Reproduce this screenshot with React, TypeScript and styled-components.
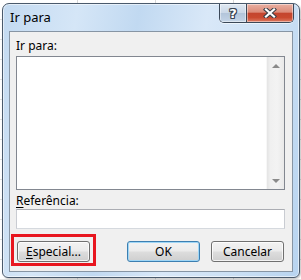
import React from "react";
import styled, { createGlobalStyle } from "styled-components";

const Global = createGlobalStyle`
  html, body { margin: 0; padding: 0; }
  body {
    width: 301px;
    height: 280px;
    overflow: hidden;
    background-color: #ffffff;
    background-image:
      repeating-linear-gradient(90deg, transparent 0 77px, #d8d8d8 77px 78px),
      repeating-linear-gradient(180deg, transparent 0 19px, #e2e2e2 19px 20px);
    font-family: "Noto Sans", "DejaVu Sans", sans-serif;
  }
  #root { padding: 3px 0 0 2px; }
`;

const Window = styled.div`
  width: 298px;
  box-sizing: border-box;
  border: 1px solid #4a5a6c;
  border-radius: 7px 7px 6px 6px;
  padding: 0 6px 5px 6px;
  background: linear-gradient(
    100deg,
    #c3daf1 0%,
    #d5e6f7 22%,
    #c1d9f1 40%,
    #d9e8f8 60%,
    #cadff4 82%,
    #b8d4f0 100%
  );
  box-shadow: inset 0 0 0 1px rgba(255, 255, 255, 0.55), 1px 1px 2px rgba(0,0,0,0.25);
`;

const TitleBar = styled.div`
  height: 27px;
  display: flex;
  align-items: flex-start;
  justify-content: space-between;
`;

const Title = styled.div`
  margin: 5px 0 0 1px;
  font-size: 13px;
  line-height: 17px;
  color: #000;
`;

const CaptionGroup = styled.div`
  display: flex;
  margin-right: -1px;
  border: 1px solid #3b4858;
  border-top: none;
  border-radius: 0 0 5px 5px;
  overflow: hidden;
  height: 18px;
  box-shadow: 0 1px 0 rgba(255, 255, 255, 0.6);
`;

const CaptionButton = styled.div<{ $kind: "help" | "close" }>`
  width: ${(p) => (p.$kind === "help" ? "26px" : "46px")};
  height: 18px;
  display: flex;
  align-items: center;
  justify-content: center;
  box-shadow: inset 0 0 0 1px rgba(255, 255, 255, 0.45);
  border-left: ${(p) => (p.$kind === "close" ? "1px solid #3b4858" : "none")};
  background: ${(p) =>
    p.$kind === "help"
      ? "linear-gradient(180deg, #dfe8f2 0%, #cbd8e7 48%, #b3c5da 52%, #c4d4e6 100%)"
      : "linear-gradient(180deg, #eab0a2 0%, #dc8b79 45%, #c4452e 52%, #c9492f 75%, #dd7a62 100%)"};
`;

const HelpGlyph = styled.span`
  font-family: "DejaVu Sans", sans-serif;
  font-weight: bold;
  font-size: 13px;
  line-height: 13px;
  color: #ffffff;
  text-shadow:
    1px 0 0 #3a4552, -1px 0 0 #3a4552, 0 1px 0 #3a4552, 0 -1px 0 #3a4552,
    1px 1px 0 #3a4552, -1px -1px 0 #3a4552, 1px -1px 0 #3a4552, -1px 1px 0 #3a4552;
`;

const Client = styled.div`
  border: 1px solid #8795a4;
  background: #f0f0f0;
  padding: 6px 7px 9px 6px;
  display: flex;
  flex-direction: column;
`;

const Label = styled.div<{ $gap?: number }>`
  font-size: 12px;
  line-height: 16px;
  color: #000;
  margin-top: ${(p) => p.$gap ?? 0}px;
  margin-bottom: 2px;
  u { text-decoration-thickness: 1px; text-underline-offset: 2px; }
`;

const ListBox = styled.div`
  height: 134px;
  box-sizing: border-box;
  border: 1px solid #828790;
  background: #ffffff;
  display: flex;
  justify-content: flex-end;
`;

const ScrollBar = styled.div`
  width: 17px;
  display: flex;
  flex-direction: column;
  background: linear-gradient(90deg, #e4e4e4 0%, #f0f0f0 20%, #f3f3f3 60%, #e9e9e9 100%);
  border-left: 1px solid #f7f7f7;
`;

const ArrowButton = styled.div`
  height: 17px;
  display: flex;
  align-items: center;
  justify-content: center;
`;

const Track = styled.div`
  flex: 1;
`;

const Arrow = styled.div<{ $dir: "up" | "down" }>`
  width: 0;
  height: 0;
  border-left: 4px solid transparent;
  border-right: 4px solid transparent;
  ${(p) =>
    p.$dir === "up"
      ? "border-bottom: 4px solid #8a8a8a;"
      : "border-top: 4px solid #8a8a8a;"}
`;

const TextInput = styled.div`
  height: 20px;
  box-sizing: border-box;
  border: 1px solid #abadb3;
  border-left-color: #c9ccd2;
  border-right-color: #c9ccd2;
  border-bottom-color: #d5d9de;
  background: #ffffff;
  margin-top: -2px;
`;

const ButtonRow = styled.div`
  display: flex;
  margin-top: 12px;
  padding-left: 1px;
  padding-right: 1px;
`;

const Button = styled.div<{ $default?: boolean; $highlight?: boolean }>`
  position: relative;
  width: 73px;
  height: 21px;
  box-sizing: border-box;
  border: 1px solid ${(p) => (p.$default ? "#3c7fb1" : "#707070")};
  border-radius: 3px;
  display: flex;
  align-items: center;
  justify-content: center;
  font-size: 12px;
  color: #000;
  background: linear-gradient(180deg, #f2f2f2 0%, #ebebeb 48%, #dddddd 52%, #cfcfcf 100%);
  box-shadow: inset 0 0 0 1px ${(p) => (p.$default ? "#9fd6f6" : "rgba(255,255,255,0.75)")};
  u { text-decoration-thickness: 1px; text-underline-offset: 2px; }
  ${(p) =>
    p.$highlight
      ? `&::after {
          content: "";
          position: absolute;
          top: -8px;
          left: -7px;
          right: -7px;
          bottom: -5px;
          border: 3px solid #e8161f;
        }`
      : ""}
`;

const Spacer = styled.div`
  flex: 1;
`;

const Gap = styled.div`
  width: 11px;
`;

function CloseGlyph() {
  return (
    <svg width="14" height="10" viewBox="0 0 14 10">
      <path d="M3 1.5 L11 8.5 M11 1.5 L3 8.5" stroke="#3a3f47" strokeWidth="4.2" strokeLinecap="square" />
      <path d="M3 1.5 L11 8.5 M11 1.5 L3 8.5" stroke="#ffffff" strokeWidth="2.2" strokeLinecap="square" />
    </svg>
  );
}

export default function App() {
  return (
    <>
      <Global />
      <Window>
        <TitleBar>
          <Title>Ir para</Title>
          <CaptionGroup>
            <CaptionButton $kind="help">
              <HelpGlyph>?</HelpGlyph>
            </CaptionButton>
            <CaptionButton $kind="close">
              <CloseGlyph />
            </CaptionButton>
          </CaptionGroup>
        </TitleBar>
        <Client>
          <Label>Ir para:</Label>
          <ListBox>
            <ScrollBar>
              <ArrowButton>
                <Arrow $dir="up" />
              </ArrowButton>
              <Track />
              <ArrowButton>
                <Arrow $dir="down" />
              </ArrowButton>
            </ScrollBar>
          </ListBox>
          <Label $gap={3}>
            <u>R</u>eferência:
          </Label>
          <TextInput />
          <ButtonRow>
            <Button $highlight>
              <span>
                <u>E</u>special...
              </span>
            </Button>
            <Spacer />
            <Button $default>OK</Button>
            <Gap />
            <Button>Cancelar</Button>
          </ButtonRow>
        </Client>
      </Window>
    </>
  );
}
